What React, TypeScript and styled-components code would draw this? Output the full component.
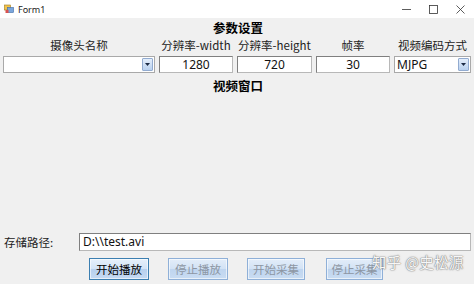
import React from 'react';
import styled, { createGlobalStyle } from 'styled-components';

const GlobalStyle = createGlobalStyle`
  html, body {
    margin: 0;
    padding: 0;
    background: #f0f0f0;
  }
  body {
    font-family: "Noto Sans CJK SC", "Noto Sans", sans-serif;
    font-size: 12px;
    color: #000;
  }
`;

const Window = styled.div`
  width: 474px;
  height: 284px;
  display: flex;
  flex-direction: column;
  background: #f0f0f0;
  position: relative;
  overflow: hidden;
`;

const TitleBar = styled.div`
  height: 18px;
  background: #ffffff;
  display: flex;
  align-items: center;
  flex-shrink: 0;
`;

const TitleIcon = styled.svg`
  width: 10px;
  height: 10px;
  margin-left: 4px;
  margin-right: 4px;
`;

const TitleText = styled.span`
  font-family: "Noto Sans", "Liberation Sans", sans-serif;
  font-size: 9px;
  color: #222;
  flex: 1;
`;

const CaptionButton = styled.div`
  width: 27px;
  height: 18px;
  display: flex;
  align-items: center;
  justify-content: center;
`;

const Body = styled.div`
  flex: 1;
  display: flex;
  flex-direction: column;
`;

const SectionTitle = styled.div<{ $h: number }>`
  font-weight: bold;
  font-size: 12.5px;
  text-align: center;
  height: ${p => p.$h}px;
  line-height: ${p => p.$h}px;
  padding-left: 2px;
`;

const ParamGrid = styled.div`
  display: grid;
  grid-template-columns: 152px 74px 75px 74px 77px;
  column-gap: 4px;
  row-gap: 3px;
  padding-left: 3px;
`;

const ParamLabel = styled.div`
  text-align: center;
  font-size: 11.5px;
  color: #222;
  height: 16px;
  line-height: 16px;
`;

const TextBox = styled.div<{ $align?: string }>`
  box-sizing: border-box;
  height: 17px;
  background: #fff;
  border: 1px solid #8c8c8c;
  border-color: #7f7f7f #b8b8b8 #b8b8b8 #7f7f7f;
  font-size: 12px;
  line-height: 15px;
  text-align: ${p => (p.$align === 'left' ? 'left' : 'center')};
  padding-left: ${p => (p.$align === 'left' ? '3px' : '0')};
  font-family: "Noto Sans", "Noto Sans CJK SC", sans-serif;
  color: #111;
  overflow: hidden;
  white-space: nowrap;
`;

const Combo = styled.div`
  box-sizing: border-box;
  height: 17px;
  background: #fff;
  border: 1px solid #a9a9a9;
  display: flex;
  align-items: stretch;
  font-family: "Noto Sans", sans-serif;
  font-size: 12px;
  color: #111;
`;

const ComboValue = styled.div`
  flex: 1;
  line-height: 15px;
  padding-left: 2px;
`;

const ComboArrow = styled.div`
  width: 9px;
  margin: 1px;
  background: linear-gradient(#e4eefb, #b9d1ef);
  border: 1px solid #92abd0;
  border-radius: 1px;
  display: flex;
  align-items: center;
  justify-content: center;
`;

const Spacer = styled.div`
  flex: 1;
`;

const PathRow = styled.div`
  display: flex;
  align-items: center;
  padding-left: 4px;
  padding-right: 3px;
`;

const PathLabel = styled.div`
  width: 75px;
  font-size: 11.5px;
  color: #222;
`;

const PathBox = styled(TextBox)`
  flex: 1;
  height: 18px;
  line-height: 16px;
`;

const ButtonRow = styled.div`
  display: flex;
  padding-left: 89px;
  margin-top: 7px;
  margin-bottom: 4px;
  height: 22px;
`;

const WinButton = styled.div<{ $w: number; $gap: number; $disabled: boolean }>`
  box-sizing: border-box;
  width: ${p => p.$w}px;
  margin-right: ${p => p.$gap}px;
  height: 22px;
  border: 1px solid ${p => (p.$disabled ? '#8fb0d8' : '#3c7fb1')};
  background: ${p =>
    p.$disabled
      ? 'linear-gradient(#e3edf9 0%, #d2e2f5 50%, #bfd5ef 51%, #c9dcf2 100%)'
      : 'linear-gradient(#e6f0fb 0%, #d3e4f7 50%, #b7d0ee 51%, #c5daf3 100%)'};
  box-shadow: inset 0 0 0 1px rgba(255, 255, 255, 0.6);
  color: ${p => (p.$disabled ? '#8d96a3' : '#000')};
  font-size: 11.5px;
  display: flex;
  align-items: center;
  justify-content: center;
`;

const Watermark = styled.div`
  position: absolute;
  left: 372px;
  top: 251px;
  font-size: 14.5px;
  color: rgba(255, 255, 255, 0.95);
  text-shadow: 0 0 1px #8a8a8a, 0 0 1px #8a8a8a, 0 0 2px rgba(120, 120, 120, 0.7);
  letter-spacing: 0.3px;
  white-space: nowrap;
`;

const Arrow = () => (
  <svg width="5" height="3" viewBox="0 0 5 3">
    <path d="M0 0 H5 L2.5 3 Z" fill="#1b2a44" />
  </svg>
);

const params = [
  { label: '摄像头名称', kind: 'combo', value: '' },
  { label: '分辨率-width', kind: 'text', value: '1280' },
  { label: '分辨率-height', kind: 'text', value: '720' },
  { label: '帧率', kind: 'text', value: '30' },
  { label: '视频编码方式', kind: 'combo', value: 'MJPG' },
];

const buttons = [
  { text: '开始播放', w: 60, gap: 19, disabled: false },
  { text: '停止播放', w: 60, gap: 19, disabled: true },
  { text: '开始采集', w: 58, gap: 21, disabled: true },
  { text: '停止采集', w: 57, gap: 0, disabled: true },
];

export default function App() {
  return (
    <>
      <GlobalStyle />
      <Window>
        <TitleBar>
          <TitleIcon viewBox="0 0 10 10">
            <rect x="0.5" y="1" width="6" height="5" fill="#f3c44b" stroke="#a07a1c" strokeWidth="0.6" />
            <rect x="3.5" y="3.5" width="6" height="5" fill="#7aa6dc" stroke="#3d6aa5" strokeWidth="0.6" />
            <rect x="1.5" y="6" width="3" height="3" fill="#d9534f" />
          </TitleIcon>
          <TitleText>Form1</TitleText>
          <CaptionButton>
            <svg width="9" height="9" viewBox="0 0 9 9">
              <path d="M0 4.5 H9" stroke="#333" strokeWidth="0.8" />
            </svg>
          </CaptionButton>
          <CaptionButton>
            <svg width="9" height="9" viewBox="0 0 9 9">
              <rect x="0.5" y="0.5" width="8" height="8" fill="none" stroke="#333" strokeWidth="0.8" />
            </svg>
          </CaptionButton>
          <CaptionButton>
            <svg width="9" height="9" viewBox="0 0 9 9">
              <path d="M0.5 0.5 L8.5 8.5 M8.5 0.5 L0.5 8.5" stroke="#333" strokeWidth="0.8" />
            </svg>
          </CaptionButton>
        </TitleBar>
        <Body>
          <SectionTitle $h={19}>参数设置</SectionTitle>
          <ParamGrid>
            {params.map(p => (
              <ParamLabel key={p.label}>{p.label}</ParamLabel>
            ))}
            {params.map(p =>
              p.kind === 'combo' ? (
                <Combo key={p.label + '-in'}>
                  <ComboValue>{p.value}</ComboValue>
                  <ComboArrow>
                    <Arrow />
                  </ComboArrow>
                </Combo>
              ) : (
                <TextBox key={p.label + '-in'}>{p.value}</TextBox>
              )
            )}
          </ParamGrid>
          <SectionTitle $h={25}>视频窗口</SectionTitle>
          <Spacer />
          <PathRow>
            <PathLabel>存储路径:</PathLabel>
            <PathBox $align="left">D:\\test.avi</PathBox>
          </PathRow>
          <ButtonRow>
            {buttons.map(b => (
              <WinButton key={b.text} $w={b.w} $gap={b.gap} $disabled={b.disabled}>
                {b.text}
              </WinButton>
            ))}
          </ButtonRow>
        </Body>
        <Watermark>知乎 @史松源</Watermark>
      </Window>
    </>
  );
}
